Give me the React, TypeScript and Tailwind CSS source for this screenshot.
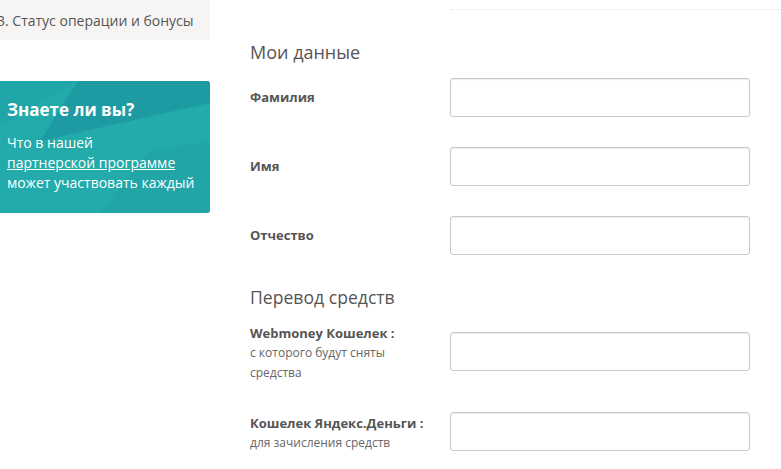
import React from "react";

const font = { fontFamily: '"Open Sans", "Liberation Sans", sans-serif' };

function Field({ label }: { label: string }) {
  return (
    <div className="flex items-center">
      <div className="w-[200px] text-[13px] font-bold text-[#555]">{label}</div>
      <input className="h-[39px] w-[300px] rounded-[3px] border border-[#c9c9c9] bg-white shadow-[inset_0_1px_1px_rgba(0,0,0,0.08)] outline-none" />
    </div>
  );
}

function TipCard() {
  return (
    <div className="relative mt-[41px] h-[132px] w-[210px] overflow-hidden rounded-r-[3px] bg-[#22abaa] text-white">
      {/* background facets */}
      <svg className="absolute inset-0" width="210" height="132" viewBox="0 0 210 132">
        <polygon points="78,0 210,0 210,22 40,60" fill="#1d96a0" opacity="0.8" />
        <polygon points="0,0 78,0 0,45" fill="#20a3a7" opacity="0.6" />
        <polygon points="210,60 150,70 100,132 210,132" fill="#1fa0a3" opacity="0.5" />
      </svg>
      <div className="relative px-[7px] pt-[17px]">
        <h3 className="text-[17px] font-bold leading-[24px]">Знаете ли вы?</h3>
        <p className="mt-[11px] text-[14px] leading-[20px]">
          Что в нашей
          <br />
          <a href="#" className="underline">
            партнерской программе
          </a>
          <br />
          может участвовать каждый
        </p>
      </div>
    </div>
  );
}

export default function App() {
  return (
    <div className="flex h-[469px] w-[781px] overflow-hidden bg-white" style={font}>
      {/* Sidebar */}
      <aside className="w-[210px] shrink-0">
        <div className="flex h-[40px] items-center overflow-hidden rounded-br-[3px] bg-[#f6f5f3]">
          <span className="ml-[-3px] whitespace-nowrap text-[14px] text-[#555]">3. Статус операции и бонусы</span>
        </div>
        <TipCard />
      </aside>

      {/* Main form */}
      <main className="ml-[40px] flex-1">
        <div className="ml-[201px] mt-[9px] border-t border-dotted border-[#e3e3e3]" />
        <h2 className="mt-[30px] text-[18px] leading-[24px] text-[#555]">Мои данные</h2>

        <div className="mt-[14px] space-y-[30px]">
          <Field label="Фамилия" />
          <Field label="Имя" />
          <Field label="Отчество" />
        </div>

        <h2 className="mt-[30px] text-[17.6px] leading-[24px] text-[#555]">Перевод средств</h2>

        <div className="mt-[14px] flex items-start">
          <div className="w-[200px] pr-[20px] leading-[20px] text-[#555]">
            <div className="text-[13px] font-bold">Webmoney Кошелек :</div>
            <div className="text-[12px] text-[#666]">с которого будут сняты средства</div>
          </div>
          <input className="mt-[9px] h-[39px] w-[300px] rounded-[3px] border border-[#c9c9c9] bg-white shadow-[inset_0_1px_1px_rgba(0,0,0,0.08)] outline-none" />
        </div>

        <div className="mt-[29px] flex items-start">
          <div className="mt-[1px] w-[200px] leading-[20px] text-[#555]">
            <div className="text-[13px] font-bold">Кошелек Яндекс.Деньги :</div>
            <div className="text-[12px] text-[#666]">для зачисления средств</div>
          </div>
          <input className="h-[39px] w-[300px] rounded-[3px] border border-[#c9c9c9] bg-white shadow-[inset_0_1px_1px_rgba(0,0,0,0.08)] outline-none" />
        </div>
      </main>
    </div>
  );
}
